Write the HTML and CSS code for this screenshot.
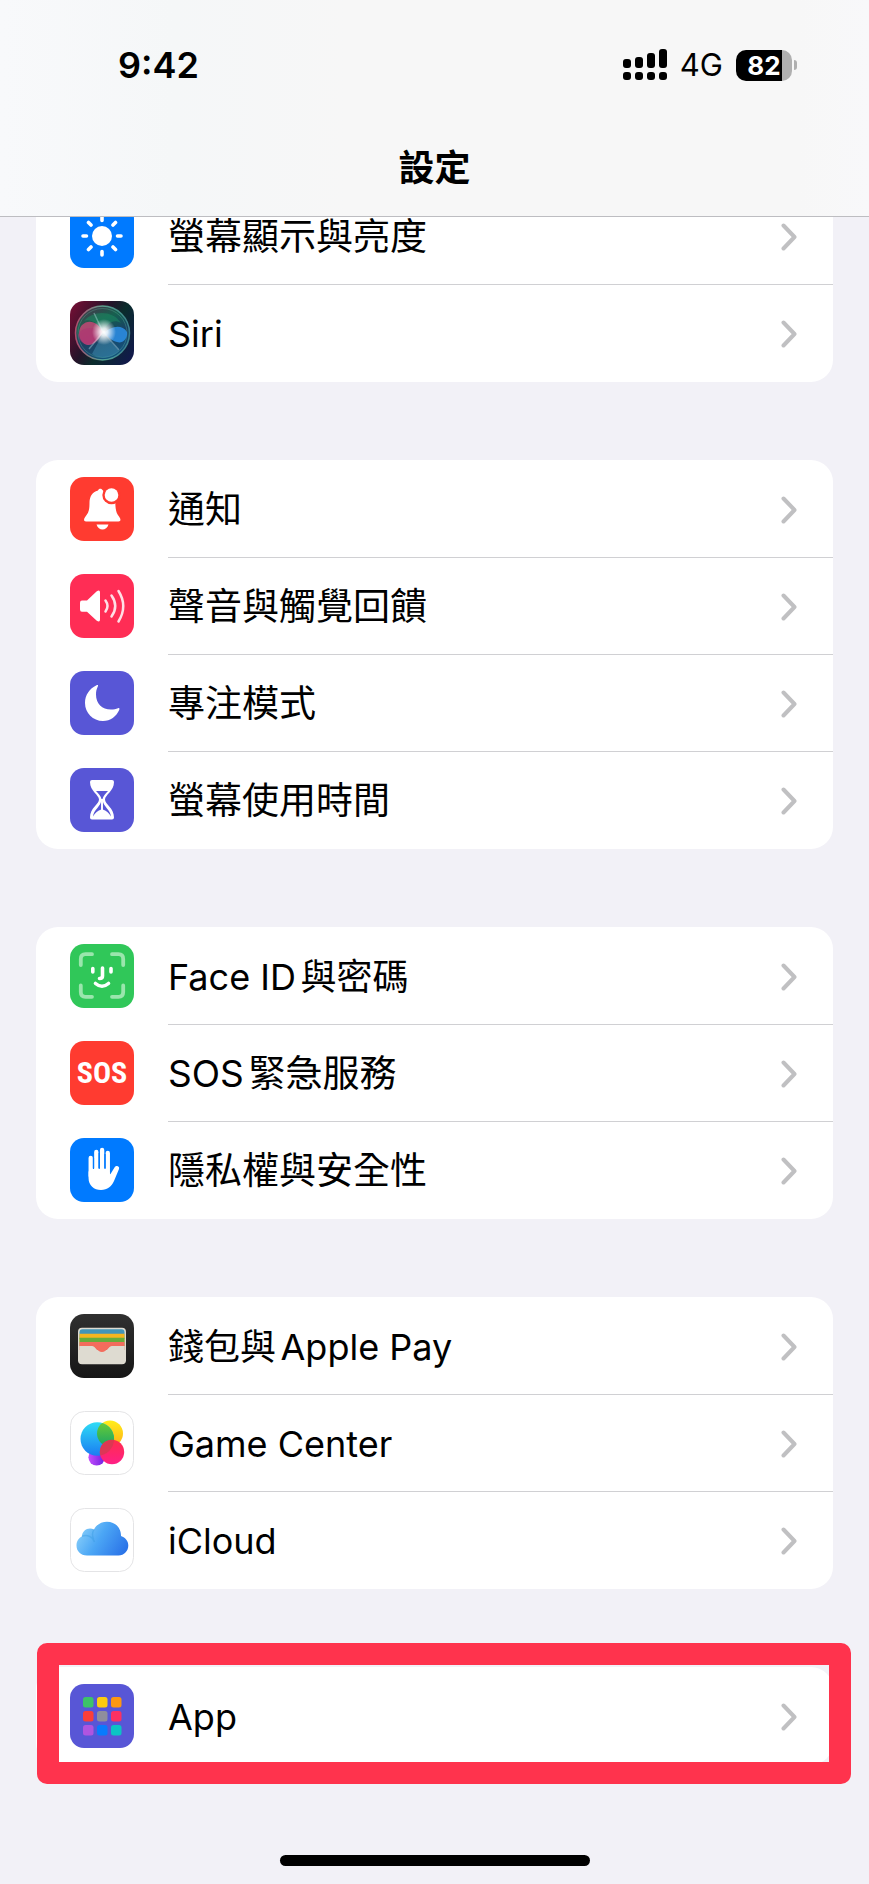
FILE: index.html
```html
<!DOCTYPE html>
<html lang="zh-Hant">
<head>
<meta charset="utf-8">
<meta name="viewport" content="width=device-width, initial-scale=1">
<title>設定</title>
<link rel="stylesheet" href="styles.css">
</head>
<body>
<svg class="defs" aria-hidden="true">
  <symbol id="chevron" viewBox="0 0 16 28"><path d="M2.5 2.500L13.500 14L2.500 25.500" fill="none" stroke="currentColor" stroke-width="4" stroke-linecap="round" stroke-linejoin="round"/></symbol>
</svg>

<header class="header">
  <div class="status">
    <time class="status-time">9:42</time>
    <div class="status-right">
      <svg class="signal" viewBox="0 0 44 32" aria-label="訊號">
        <rect x="0" y="10" width="8" height="9" rx="3"/><rect x="12" y="8" width="8" height="11" rx="3"/><rect x="24" y="4" width="8" height="15" rx="3"/><rect x="36" y="0" width="8" height="19" rx="3"/>
        <rect x="0" y="23" width="8" height="8" rx="3"/><rect x="12" y="23" width="8" height="8" rx="3"/><rect x="24" y="23" width="8" height="8" rx="3"/><rect x="36" y="23" width="8" height="8" rx="3"/>
      </svg>
      <span class="network">4G</span>
      <span class="battery"><span class="battery-body">82</span><span class="battery-tip"></span></span>
    </div>
  </div>
  <h1 class="title">設定</h1>
</header>

<main class="settings">
  <ul class="card">
    <li><a class="row" href="#display">
      <svg class="icon" viewBox="0 0 64 64"><rect width="64" height="64" rx="14" fill="#007aff"/><circle cx="32" cy="32" r="10" fill="#fff"/><g stroke="#fff" stroke-width="3.6" stroke-linecap="round"><path d="M32 16.5V13M32 47.500V51M16.500 32H13M47.500 32H51M21 21L18.500 18.500M43 21L45.500 18.500M21 43L18.500 45.500M43 43L45.500 45.500"/></g></svg>
      <span class="body"><span class="label label-han">螢幕顯示與亮度</span><svg class="chevron"><use href="#chevron"/></svg></span></a></li>
    <li><a class="row" href="#siri">
      <svg class="icon" viewBox="0 0 64 64">
        <defs>
          <linearGradient id="siri-bg" x1="0" y1="0.2" x2="1" y2="0.8"><stop offset="0" stop-color="#6b0f33"/><stop offset=".4" stop-color="#241329"/><stop offset=".6" stop-color="#0a2c2c"/><stop offset="1" stop-color="#111a4a"/></linearGradient>
          <linearGradient id="siri-orb" x1="0.2" y1="0" x2="0.6" y2="1"><stop offset="0" stop-color="#4a3a50"/><stop offset=".3" stop-color="#187058"/><stop offset=".6" stop-color="#1c4a70"/><stop offset="1" stop-color="#15618f"/></linearGradient>
          <radialGradient id="siri-glow"><stop offset="0" stop-color="#fff"/><stop offset=".3" stop-color="#fff" stop-opacity=".85"/><stop offset="1" stop-color="#fff" stop-opacity="0"/></radialGradient>
          <linearGradient id="siri-ring" x1="0" y1="0" x2="1" y2="0"><stop offset="0" stop-color="#d8557d"/><stop offset=".5" stop-color="#69c4a6"/><stop offset="1" stop-color="#4a9ba2"/></linearGradient>
        </defs>
        <rect width="64" height="64" rx="14" fill="url(#siri-bg)"/>
        <circle cx="32.500" cy="32" r="27" fill="url(#siri-orb)" fill-opacity=".8" stroke="url(#siri-ring)" stroke-opacity=".75" stroke-width="1.500"/>
        <circle cx="32.500" cy="32" r="24.500" fill="none" stroke="#63c5a5" stroke-opacity=".3"/>
        <path d="M33 31C28 20 18 18 12 24C6 31 10 43 18 44C26 44 29 37 33 31Z" fill="#d9447a" fill-opacity=".75"/>
        <path d="M33 31C23 26 12 25 8 34C10 45 22 48 33 31Z" fill="#b02f72" fill-opacity=".5"/>
        <path d="M34 32C41 25 52 23 57 31C58 38 52 43 47 41C42 40 38 36 34 32Z" fill="#2d8fe6" fill-opacity=".85"/>
        <path d="M14 20C23 9 43 9 51 22C43 17 37 23 33 31C29 23 21 17 14 20Z" fill="#1c8d64" fill-opacity=".5"/>
        <path d="M33 32L22 53C30 59 42 57 49 50Z" fill="#55a8cc" fill-opacity=".35"/>
        <path d="M33 31L49 49M33 31L19 48M33 31L24 12" stroke="#d3f5ff" stroke-opacity=".35" stroke-width="1.500"/>
        <ellipse cx="34" cy="31" rx="12" ry="13" fill="url(#siri-glow)"/>
      </svg>
      <span class="body"><span class="label">Siri</span><svg class="chevron"><use href="#chevron"/></svg></span></a></li>
  </ul>

  <ul class="card">
    <li><a class="row" href="#notifications">
      <svg class="icon" viewBox="0 0 64 64"><rect width="64" height="64" rx="14" fill="#ff3b30"/><path d="M31.500 12C30 11.500 28.500 12 28 13.500C22 15 19.500 20 19.500 26C19.500 33 18.500 36 15.500 39.500C13.500 42 13.500 44.500 16 44.500H48.500C51 44.500 51 42 49 39.500C46.500 36.500 45.500 33 45.300 26Z" fill="#fff"/><circle cx="41.500" cy="18" r="9.200" fill="#ff3b30"/><circle cx="41.500" cy="18" r="6.800" fill="#fff"/><path d="M26.500 47.500H38.500C37.500 51 35 52.500 32.500 52.500S27.500 51 26.500 47.500Z" fill="#fff"/></svg>
      <span class="body"><span class="label label-han">通知</span><svg class="chevron"><use href="#chevron"/></svg></span></a></li>
    <li><a class="row" href="#sounds">
      <svg class="icon" viewBox="0 0 64 64"><rect width="64" height="64" rx="14" fill="#ff2d55"/><path d="M12 26.500H17L26.500 17.500Q30 15 30 18.500V45.500Q30 49 26.500 46.500L17 37.800H12Q10 37.800 10 35.500V28.800Q10 26.500 12 26.500Z" fill="#fff"/><path d="M35.500 26.500Q39.500 32 35.500 37.500M41.500 21.500Q49 32 41.500 42.500M48.500 17Q58 32 48.500 47.500" fill="none" stroke="#fff" stroke-opacity=".85" stroke-width="2.500" stroke-linecap="round"/></svg>
      <span class="body"><span class="label label-han">聲音與觸覺回饋</span><svg class="chevron"><use href="#chevron"/></svg></span></a></li>
    <li><a class="row" href="#focus">
      <svg class="icon" viewBox="0 0 64 64"><rect width="64" height="64" rx="14" fill="#5856d6"/><path d="M26.500 14.200C28 13.500 28.300 14 27.800 15.500C26.500 18 26 20.500 26 23.500C26 32.500 32 38.500 41 38.500C43.800 38.500 46 38 48 37.200C49.500 36.800 49.800 37.500 49.200 39C46.300 45.500 40.500 50 33 50C23 50 15 42 15 32C15 24 19.500 17.500 26.500 14.200Z" fill="#fff"/></svg>
      <span class="body"><span class="label label-han">專注模式</span><svg class="chevron"><use href="#chevron"/></svg></span></a></li>
    <li><a class="row" href="#screen-time">
      <svg class="icon" viewBox="0 0 64 64"><rect width="64" height="64" rx="14" fill="#5856d6"/><path d="M22 12H42Q44 12 44 14C44 23 35 27 35 31.500C35 36 44 40 44 49.500Q44 51.500 42 51.500H22Q20 51.500 20 49.500C20 40 29 36 29 31.500C29 27 20 23 20 14Q20 12 22 12Z" fill="#fff"/><path d="M26 23H38C35.500 26 33 28 32.500 31H31.500C31 28 28.500 26 26 23ZM31.200 32.500V41.500C28 42.500 25 45 23 48.500C23.500 42 31 38 31.200 32.500ZM32.800 32.500V41.500C36 42.500 39 45 41 48.500C40.500 42 33 38 32.800 32.500Z" fill="#5856d6"/><path d="M31.200 31L32.800 31V43H31.200Z" fill="#fff"/></svg>
      <span class="body"><span class="label label-han">螢幕使用時間</span><svg class="chevron"><use href="#chevron"/></svg></span></a></li>
  </ul>

  <ul class="card">
    <li><a class="row" href="#face-id">
      <svg class="icon" viewBox="0 0 64 64"><rect width="64" height="64" rx="14" fill="#30c759"/><path d="M10.800 21V15Q10.800 10.200 15.500 10.200H22M42 10.200H48.500Q53.200 10.200 53.200 15V21M53.200 41.500V48Q53.200 52.800 48.500 52.800H42M22 52.800H15.500Q10.800 52.800 10.800 48V41.500" fill="none" stroke="#9ae6ad" stroke-width="3.800" stroke-linecap="round"/><path d="M22.800 24.500V28M41 24.500V28M32.500 24V32Q32.500 34.500 29.500 34.500M25.500 39.500Q32 45 38.500 39.500" fill="none" stroke="#fff" stroke-width="3.600" stroke-linecap="round"/></svg>
      <span class="body"><span class="label">Face ID與密碼</span><svg class="chevron"><use href="#chevron"/></svg></span></a></li>
    <li><a class="row" href="#sos">
      <span class="icon icon-sos">SOS</span>
      <span class="body"><span class="label label-han">SOS緊急服務</span><svg class="chevron"><use href="#chevron"/></svg></span></a></li>
    <li><a class="row" href="#privacy">
      <svg class="icon" viewBox="0 0 64 64"><rect width="64" height="64" rx="14" fill="#007aff"/><g fill="none" stroke="#fff" stroke-width="4.300" stroke-linecap="round"><path d="M20.700 20V38M26.300 14V34M32.100 12V34M37.800 15V35"/></g><path d="M18.550 34V40C18.550 47.500 24 52 31 52C37.500 52 41.500 48.500 44 43L49 31C50 28.500 46.500 26.500 44.500 29.500L40.500 36Q39.900 36.500 39.900 35L36 30H20Z" fill="#fff"/><path d="M23.500 20V31M29.200 15V31M35 16V31" stroke="#007aff" stroke-width="1.200"/></svg>
      <span class="body"><span class="label label-han">隱私權與安全性</span><svg class="chevron"><use href="#chevron"/></svg></span></a></li>
  </ul>

  <ul class="card">
    <li><a class="row" href="#wallet">
      <svg class="icon" viewBox="0 0 64 64">
        <defs><linearGradient id="wallet-bg" x1="0" y1="0" x2="0" y2="1"><stop offset="0" stop-color="#303030"/><stop offset="1" stop-color="#161616"/></linearGradient><clipPath id="wallet-clip"><rect x="9.500" y="15.300" width="45" height="33.500" rx="3"/></clipPath></defs>
        <rect width="64" height="64" rx="14" fill="url(#wallet-bg)"/><rect x="8" y="13.800" width="48" height="36.500" rx="4" fill="#dedbd1"/>
        <g clip-path="url(#wallet-clip)"><path fill="#4295b8" d="M9 15H55V25H9Z"/><path fill="#f5b51e" d="M9 19.700H55V28H9Z"/><path fill="#67ac3b" d="M9 23.800H55V32H9Z"/><path fill="#f36c5d" d="M9 28H55V36H9Z"/><path fill="#dedbd1" d="M9 32H22C26 32 26 38 32 38S38 32 42 32H55V50H9Z"/><path fill="#f36c5d" d="M22 31.500C26 32 27 38 32 38S38 32 42 31.500Z"/></g>
      </svg>
      <span class="body"><span class="label">錢包與Apple Pay</span><svg class="chevron"><use href="#chevron"/></svg></span></a></li>
    <li><a class="row" href="#game-center">
      <svg class="icon" viewBox="0 0 64 64">
        <defs><linearGradient id="gc-blue" x1="0" y1="0" x2="0" y2="1"><stop offset="0" stop-color="#2fdcf5"/><stop offset="1" stop-color="#1a7cf2"/></linearGradient><linearGradient id="gc-green" x1="0" y1="0" x2="0" y2="1"><stop offset="0" stop-color="#6fce32"/><stop offset="1" stop-color="#1aa565"/></linearGradient><linearGradient id="gc-yellow" x1="0" y1="0" x2="0" y2="1"><stop offset="0" stop-color="#ffee1a"/><stop offset="1" stop-color="#ffae17"/></linearGradient><linearGradient id="gc-red" x1="0" y1="0" x2="0" y2="1"><stop offset="0" stop-color="#ff2e4b"/><stop offset="1" stop-color="#ff1f86"/></linearGradient><linearGradient id="gc-purple"><stop offset="0" stop-color="#c64dfc"/><stop offset="1" stop-color="#6b1fe0"/></linearGradient><clipPath id="gc-clip"><circle cx="27.300" cy="28" r="16.800"/></clipPath></defs>
        <rect x=".5" y=".5" width="63" height="63" rx="14" fill="#fff" stroke="#e4e4e6"/>
        <circle cx="26.700" cy="46.300" r="8.300" fill="url(#gc-purple)"/><circle cx="40" cy="22.500" r="13" fill="url(#gc-yellow)"/><circle cx="27.300" cy="28" r="16.800" fill="url(#gc-blue)"/><circle cx="40" cy="22.500" r="13" fill="url(#gc-green)" clip-path="url(#gc-clip)"/><circle cx="42" cy="41" r="12.200" fill="url(#gc-red)"/><circle cx="42" cy="41" r="12.200" fill="#d23c50" fill-opacity=".75" clip-path="url(#gc-clip)"/>
      </svg>
      <span class="body"><span class="label">Game Center</span><svg class="chevron"><use href="#chevron"/></svg></span></a></li>
    <li><a class="row" href="#icloud">
      <svg class="icon" viewBox="0 0 64 64">
        <defs><linearGradient id="cloud" x1="0" y1="0.3" x2="1" y2="0.7"><stop offset="0" stop-color="#8ad0fa"/><stop offset=".45" stop-color="#4ba6f5"/><stop offset="1" stop-color="#2b74e8"/></linearGradient></defs>
        <rect x=".5" y=".5" width="63" height="63" rx="14" fill="#fff" stroke="#e4e4e6"/>
        <path d="M17 47.500C10.500 47.500 6.500 43 6.500 37.500C6.500 33 9 30 12 28.300C12 22.500 18.500 18.500 24 21.500C26.500 16.500 31.500 13.700 37 13.700C45.500 13.700 51.200 20 51 28C55.500 29.500 58.300 33 58.300 37.500C58.300 43 54 47.500 48.500 47.500Z" fill="url(#cloud)"/>
        <path d="M12 28.300C17 26 23 29 24.500 34M24 21.500C22 25 22 28 23.500 31" fill="none" stroke="#2f96dc" stroke-opacity=".35" stroke-width="1.500"/>
      </svg>
      <span class="body"><span class="label">iCloud</span><svg class="chevron"><use href="#chevron"/></svg></span></a></li>
  </ul>

  <ul class="card card-marked">
    <li><a class="row" href="#apps">
      <svg class="icon" viewBox="0 0 64 64"><rect width="64" height="64" rx="14" fill="#5856d6"/>
        <rect x="13" y="13" width="10.500" height="10.500" rx="2.500" fill="#3cc369"/><rect x="27" y="13" width="10.500" height="10.500" rx="2.500" fill="#fdcb0e"/><rect x="41" y="13" width="10.500" height="10.500" rx="2.500" fill="#fc9712"/>
        <rect x="13" y="27" width="10.500" height="10.500" rx="2.500" fill="#fb3e3a"/><rect x="27" y="27" width="10.500" height="10.500" rx="2.500" fill="#8f8e9c"/><rect x="41" y="27" width="10.500" height="10.500" rx="2.500" fill="#fb3162"/>
        <rect x="13" y="41" width="10.500" height="10.500" rx="2.500" fill="#af55e0"/><rect x="27" y="41" width="10.500" height="10.500" rx="2.500" fill="#087bfd"/><rect x="41" y="41" width="10.500" height="10.500" rx="2.500" fill="#0cc4c4"/></svg>
      <span class="body"><span class="label">App</span><svg class="chevron"><use href="#chevron"/></svg></span></a></li>
  </ul>
</main>

<footer class="footer"><div class="home-indicator"></div></footer>
</body>
</html>
```

FILE: styles.css
```css
*,
*::before,
*::after {
  box-sizing: border-box;
}

body {
  margin: 0;
  background: #f2f1f7;
  color: #000;
  font-family: Inter, "Noto Sans CJK TC", sans-serif;
  font-size: 36px;
  line-height: 48px;
}

.defs {
  display: block;
  width: 0;
  height: 0;
}

.header {
  position: sticky;
  top: 0;
  z-index: 2;
  padding: 41px 72px 24px 118px;
  border-bottom: 1px solid #bdbdc1;
  background: linear-gradient(90deg, #f8f9fb 0, #f5f7f8 20%, #f7f7f7 40%, #f7f7f7 92%, #f8f8fa 100%);
}

.status {
  display: flex;
  align-items: center;
  justify-content: space-between;
  height: 48px;
}

.status-time {
  font-weight: 600;
}

.status-right {
  display: flex;
  align-items: center;
  gap: 13px;
}

.signal {
  width: 44px;
  height: 32px;
}

.network {
  font-size: 31px;
}

.battery {
  display: flex;
  align-items: center;
  gap: 2px;
}

.battery-body {
  width: 56px;
  height: 31px;
  border-radius: 10px;
  background: linear-gradient(90deg, #000 46px, #b0b0b0 46px);
  color: #fff;
  font-size: 26px;
  font-weight: 700;
  line-height: 31px;
  text-align: center;
}

.battery-tip {
  width: 3px;
  height: 10px;
  border-radius: 0 4px 4px 0;
  background: #b0b0b0;
}

.title {
  margin: 55px 0 0;
  padding-right: 46px;
  font-size: 36px;
  font-weight: 700;
  line-height: 48px;
  text-align: center;
}

.settings {
  display: flex;
  flex-direction: column;
  gap: 78px;
  margin-top: -30px;
  padding: 0 36px;
}

.card {
  margin: 0;
  padding: 0 0 1px;
  border-radius: 22px;
  background: #fff;
  list-style: none;
}

.row {
  display: flex;
  align-items: center;
  gap: 34px;
  height: 97px;
  padding-left: 34px;
  color: inherit;
  text-decoration: none;
}

.icon {
  flex: none;
  width: 64px;
  height: 64px;
}

.icon-sos {
  border-radius: 14px;
  background: #ff3b30;
  color: #fff;
  font-family: "Roboto Condensed", "Liberation Sans Narrow", Roboto, sans-serif;
  font-size: 30px;
  font-weight: 700;
  line-height: 64px;
  text-align: center;
}

.body {
  display: flex;
  flex: 1;
  align-items: center;
  justify-content: space-between;
  height: 100%;
  padding-top: 2px;
  padding-right: 36px;
}

.card li + li .body {
  border-top: 1px solid #d0d0d3;
}

.label {
  text-autospace: normal;
}

.label-han {
  font-size: 37px;
}

.chevron {
  width: 16px;
  height: 28px;
  color: #c0c0c2;
}

.card-marked {
  position: relative;
}

.card-marked::after {
  content: "";
  position: absolute;
  inset: -24px -18px -19px 1px;
  border: 22px solid #ff334d;
  border-radius: 10px;
  pointer-events: none;
}

.footer {
  padding: 90px 0 18px;
}

.home-indicator {
  width: 310px;
  height: 11px;
  margin: 0 auto;
  border-radius: 6px;
  background: #000;
}
```
